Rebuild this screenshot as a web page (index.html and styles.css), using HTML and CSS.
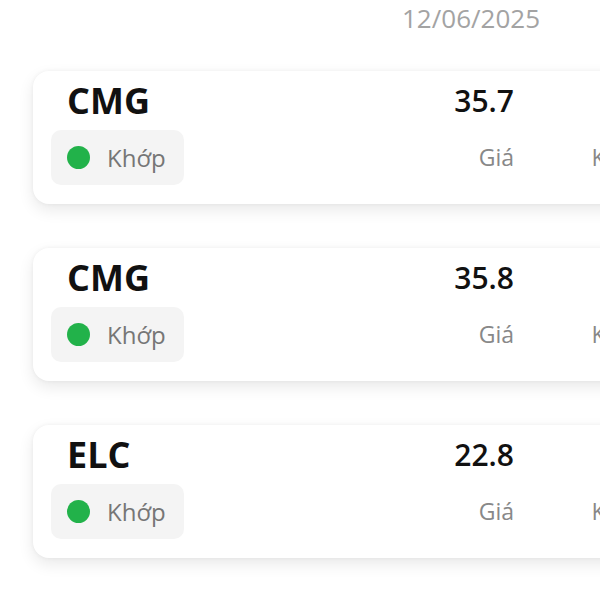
FILE: index.html
```html
<!DOCTYPE html>
<html lang="vi">
<head>
    <meta charset="UTF-8">
    <meta name="viewport" content="width=device-width, initial-scale=1.0">
    <title>Lệnh khớp</title>
    <link rel="stylesheet" href="styles.css">
</head>
<body>
    <div class="page">
        <div class="date-row">
            <span class="date">12/06/2025</span>
        </div>
        <div class="order-list">
            <div class="order-card">
                <div class="order-main">
                    <div class="symbol">CMG</div>
                    <div class="status">
                        <span class="status-dot"></span>
                        <span class="status-text">Khớp</span>
                    </div>
                </div>
                <div class="order-col price-col">
                    <div class="col-value">35.7</div>
                    <div class="col-label">Giá</div>
                </div>
                <div class="order-col qty-col">
                    <div class="col-value"><span>1,000</span></div>
                    <div class="col-label">Khối lượng</div>
                </div>
            </div>
            <div class="order-card">
                <div class="order-main">
                    <div class="symbol">CMG</div>
                    <div class="status">
                        <span class="status-dot"></span>
                        <span class="status-text">Khớp</span>
                    </div>
                </div>
                <div class="order-col price-col">
                    <div class="col-value">35.8</div>
                    <div class="col-label">Giá</div>
                </div>
                <div class="order-col qty-col">
                    <div class="col-value"><span>500</span></div>
                    <div class="col-label">Khối lượng</div>
                </div>
            </div>
            <div class="order-card">
                <div class="order-main">
                    <div class="symbol">ELC</div>
                    <div class="status">
                        <span class="status-dot"></span>
                        <span class="status-text">Khớp</span>
                    </div>
                </div>
                <div class="order-col price-col">
                    <div class="col-value">22.8</div>
                    <div class="col-label">Giá</div>
                </div>
                <div class="order-col qty-col">
                    <div class="col-value"><span>2,000</span></div>
                    <div class="col-label">Khối lượng</div>
                </div>
            </div>
        </div>
    </div>
</body>
</html>
```

FILE: styles.css
```css
html, body {
    overflow: hidden;
}

body {
    margin: 0;
    background-color: #fff;
    font-family: "Open Sans", "Noto Sans", sans-serif;
}

.page {
    width: 760px;
    padding: 1px 0 38px 33px;
}

.date-row {
    display: flex;
    justify-content: flex-end;
    width: 507px;
}

.date {
    font-size: 26px;
    line-height: 34px;
    color: #a3a3a3;
}

.order-list {
    display: flex;
    flex-direction: column;
    gap: 44px;
    margin-top: 36px;
}

.order-card {
    display: flex;
    width: 694px;
    box-sizing: border-box;
    padding: 10px 20px 19px 18px;
    background-color: #fff;
    border-radius: 16px;
    box-shadow: 0 6px 16px rgba(0, 0, 0, 0.09), 0 0 4px rgba(0, 0, 0, 0.05);
}

.order-main {
    flex: 1;
}

.symbol {
    font-size: 36px;
    line-height: 40px;
    font-weight: 700;
    color: #111;
    padding-left: 16px;
}

.status {
    display: inline-flex;
    align-items: center;
    gap: 17px;
    margin-top: 9px;
    height: 55px;
    width: 133px;
    box-sizing: border-box;
    padding-left: 16px;
    background-color: #f4f4f4;
    border-radius: 10px;
}

.status-dot {
    width: 23px;
    height: 23px;
    border-radius: 50%;
    background-color: #22b24a;
}

.status-text {
    font-size: 24px;
    color: #767676;
}

.order-col {
    text-align: right;
}

.price-col {
    width: 100px;
}

.qty-col {
    width: 193px;
}

.col-value {
    font-size: 30px;
    line-height: 40px;
    font-weight: 600;
    color: #111;
}

.col-label {
    margin-top: 18px;
    font-size: 23px;
    line-height: 36px;
    color: #888;
}
```
